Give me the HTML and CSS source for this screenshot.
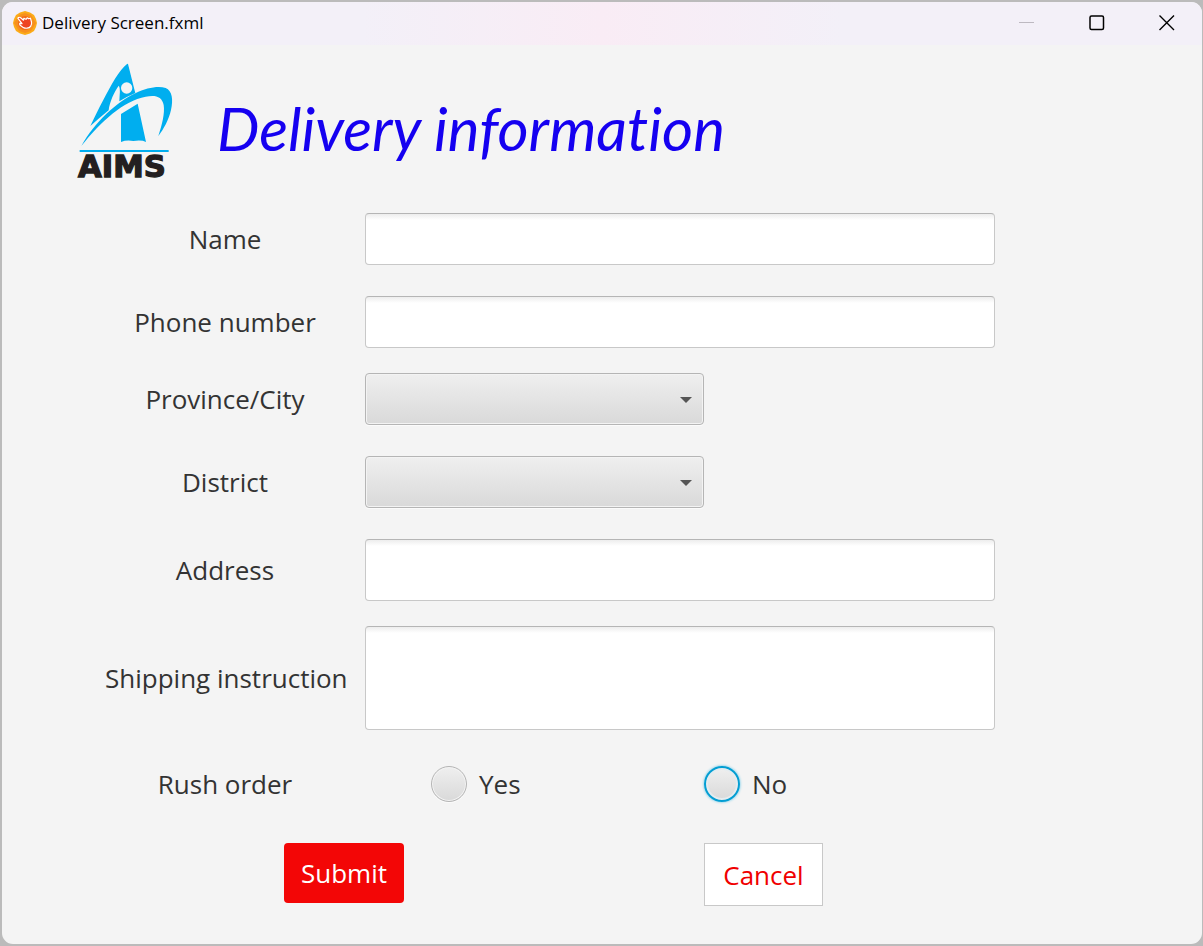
FILE: index.html
```html
<!DOCTYPE html>
<html lang="en">
<head>
<meta charset="utf-8">
<title>Delivery Screen.fxml</title>
<link rel="stylesheet" href="styles.css">
</head>
<body>
<div class="window">
  <header class="titlebar">
    <svg class="app-icon" viewBox="0 0 24 24" aria-hidden="true">
      <path fill="#fbab18" d="M12 0 17 1.500 21 4 23 8 24 12 23 16 21 20 17 22.500 12 24 7 22.500 3 20 1 16 0 12 1 8 3 4 7 1.500Z"/>
      <path fill="#f7901e" d="M12 2 18 4 23 12 18 20 12 22 6 20 1 12 6 4Z"/>
      <circle cx="12" cy="12" r="7" fill="#f26a1b"/>
      <path fill="#ee4423" stroke="#fff" stroke-width="1.200" stroke-linejoin="round" d="M4.800 7.200C5.500 6 6.600 6 7.600 6.800L10.500 9.200 10.800 7.400 13 8.300 14.200 6.800 15.800 7.800 17.400 7.200 18.500 11C19 14 17.500 16.800 14 17.200 11 17.600 9 16 6.800 13.800L6.700 12.300 9 12.600Z"/>
    </svg>
    <span class="title">Delivery Screen.fxml</span>
    <div class="window-buttons">
      <button type="button" aria-label="Minimize" disabled><svg viewBox="0 0 16 16"><path d="M0 7.500H15" stroke="#bdb9c1"/></svg></button>
      <button type="button" aria-label="Maximize"><svg viewBox="0 0 16 16"><rect x="1" y="1" width="13.500" height="13.500" rx="1.500" fill="none" stroke="#000" stroke-width="1.500"/></svg></button>
      <button type="button" aria-label="Close"><svg viewBox="0 0 16 16"><path d="M.5.500 15 15M15 .5.500 15" stroke="#000" stroke-width="1.400"/></svg></button>
    </div>
  </header>
  <main class="content">
    <div class="brand">
      <svg class="logo" viewBox="231 189 288 348" role="img" aria-label="AIMS">
        <g fill="#00aeef">
          <path d="M382 191C370 200 357 217 345 236C320 278 298 322 271 378Q298 354 326 331C329 305 343 275 356 257Q361 262 359 285L358 304Q380 290 406 279L403 268 384 192Z"/>
          <path d="M244 438C285 365 350 307 406 280C440 263 475 257 497 264C517 272 520 300 513 330C506 360 491 387 475 408C486 375 495 340 491 315C486 289 466 284 437 290C370 303 305 362 244 438Z"/>
          <path d="M363 342 413 311 438 426Q425 419 400 423 380 419 363 426Z"/>
          <rect x="239" y="450" width="267" height="6"/>
        </g>
        <circle cx="380" cy="264" r="17" fill="#f4f4f4"/>
        <text class="logo-text" x="234" y="530">AIMS</text>
      </svg>
      <h1>Delivery information</h1>
    </div>
    <form>
      <div class="row"><label for="name">Name</label><input class="field" id="name" type="text"></div>
      <div class="row"><label for="phone">Phone number</label><input class="field" id="phone" type="tel"></div>
      <div class="row tight"><label for="province">Province/City</label><span class="combo"><select id="province"><option></option></select></span></div>
      <div class="row"><label for="district">District</label><span class="combo"><select id="district"><option></option></select></span></div>
      <div class="row"><label for="address">Address</label><input class="field tall" id="address" type="text"></div>
      <div class="row tight"><label for="shipping">Shipping instruction</label><textarea class="field area" id="shipping"></textarea></div>
      <div class="row spaced" role="radiogroup" aria-labelledby="rush">
        <span class="caption" id="rush">Rush order</span>
        <div class="options">
          <label><input type="radio" name="rush" value="yes">Yes</label>
          <label><input class="focused" type="radio" name="rush" value="no">No</label>
        </div>
      </div>
      <div class="actions">
        <button class="submit" type="submit">Submit</button>
        <button class="cancel" type="button">Cancel</button>
      </div>
    </form>
  </main>
</div>
</body>
</html>
```
FILE: styles.css
```css
* { box-sizing: border-box; }

body {
  margin: 0;
  min-height: 100vh;
  display: flex;
  padding: 2px 1px 2px 2px;
  background: #bbb;
  color: #333;
  font-family: "Open Sans", "Noto Sans", sans-serif;
  font-size: 26px;
}

.window {
  flex: 1;
  border-radius: 11px;
  background: #f4f4f4;
  overflow: hidden;
}

.titlebar {
  display: flex;
  align-items: center;
  height: 43px;
  padding: 0 12px 2px 11px;
  background: linear-gradient(90deg, #f3f0f8 30%, #f9ecf5 50%, #f3f0f8 70%);
}

.app-icon { width: 24px; height: 24px; }

.title {
  margin-left: 5px;
  color: #000;
  font-size: 17px;
}

.window-buttons {
  display: flex;
  gap: 23px;
  margin-left: auto;
}

.window-buttons button {
  display: grid;
  place-items: center;
  width: 47px;
  height: 40px;
  padding: 0;
  border: 0;
  background: none;
}

.window-buttons svg { width: 16px; height: 16px; }

.content { padding: 17px 207px 38px 75px; }

.brand {
  display: flex;
  align-items: center;
  height: 118px;
  gap: 44px;
}

.logo {
  width: 96px;
  height: 116px;
  overflow: visible;
}

.logo-text {
  fill: #231f20;
  stroke: #231f20;
  stroke-width: 4px;
  font: 700 92px "DejaVu Sans", sans-serif;
}

h1 {
  margin: 0;
  padding-top: 14px;
  color: #1500f0;
  font: italic 400 60px Lato, cursive;
  font-variant-ligatures: none;
  white-space: nowrap;
}

form { padding: 33px 0 0 28px; }

.row {
  display: grid;
  grid-template-columns: 240px 1fr;
  align-items: center;
  gap: 20px;
  margin-top: 31px;
}

.row:first-child { margin-top: 0; }
.row.tight { margin-top: 25px; }
.row.spaced { margin-top: 36px; }

.row > label,
.caption {
  text-align: center;
  white-space: nowrap;
}

.field {
  display: block;
  width: 100%;
  height: 52px;
  padding: 4px 12px;
  border: 1px solid #c8c8c8;
  border-top-color: #b5b5b5;
  border-radius: 4px;
  background: linear-gradient(#ededed, #fff 6px);
  font: inherit;
}

.field.tall { height: 62px; }
.field.area { height: 104px; resize: none; }

.combo {
  position: relative;
  width: 339px;
}

.combo select {
  display: block;
  appearance: none;
  width: 100%;
  height: 52px;
  padding: 0 36px 0 12px;
  border: 1px solid #b5b5b5;
  border-radius: 4px;
  background: linear-gradient(#efefef, #d9d9d9);
  box-shadow: inset 0 0 0 1px #f3f3f3, 0 1px 0 #fbfbfb;
  font: inherit;
}

.combo::after {
  content: "";
  position: absolute;
  top: 24px;
  right: 12px;
  border: 6px solid transparent;
  border-top-color: #555;
  border-bottom-width: 0;
  pointer-events: none;
}

.options {
  display: grid;
  grid-template-columns: 273px 1fr;
  padding-left: 66px;
}

.options label {
  display: flex;
  align-items: center;
  gap: 12px;
}

.options input {
  appearance: none;
  width: 36px;
  height: 36px;
  margin: 0;
  border: 1px solid #b5b5b5;
  border-radius: 50%;
  background: linear-gradient(#efefef, #d9d9d9);
  box-shadow: inset 0 0 0 1px #f3f3f3, 0 1px 0 #fbfbfb;
}

.options .focused {
  border: 2px solid #039ed3;
  box-shadow: inset 0 0 0 2px #e4ecf0, 0 0 2px 1px #a8dcee;
}

.actions {
  display: flex;
  align-items: flex-start;
  gap: 300px;
  margin-top: 41px;
  padding-left: 179px;
}

.actions button {
  padding: 0;
  font: inherit;
}

.submit {
  width: 120px;
  height: 60px;
  border: 0;
  border-radius: 4px;
  background: #f30606;
  color: #fff;
}

.cancel {
  width: 119px;
  height: 63px;
  border: 1px solid #c8c8c8;
  background: #fff;
  color: #f00000;
}
```
